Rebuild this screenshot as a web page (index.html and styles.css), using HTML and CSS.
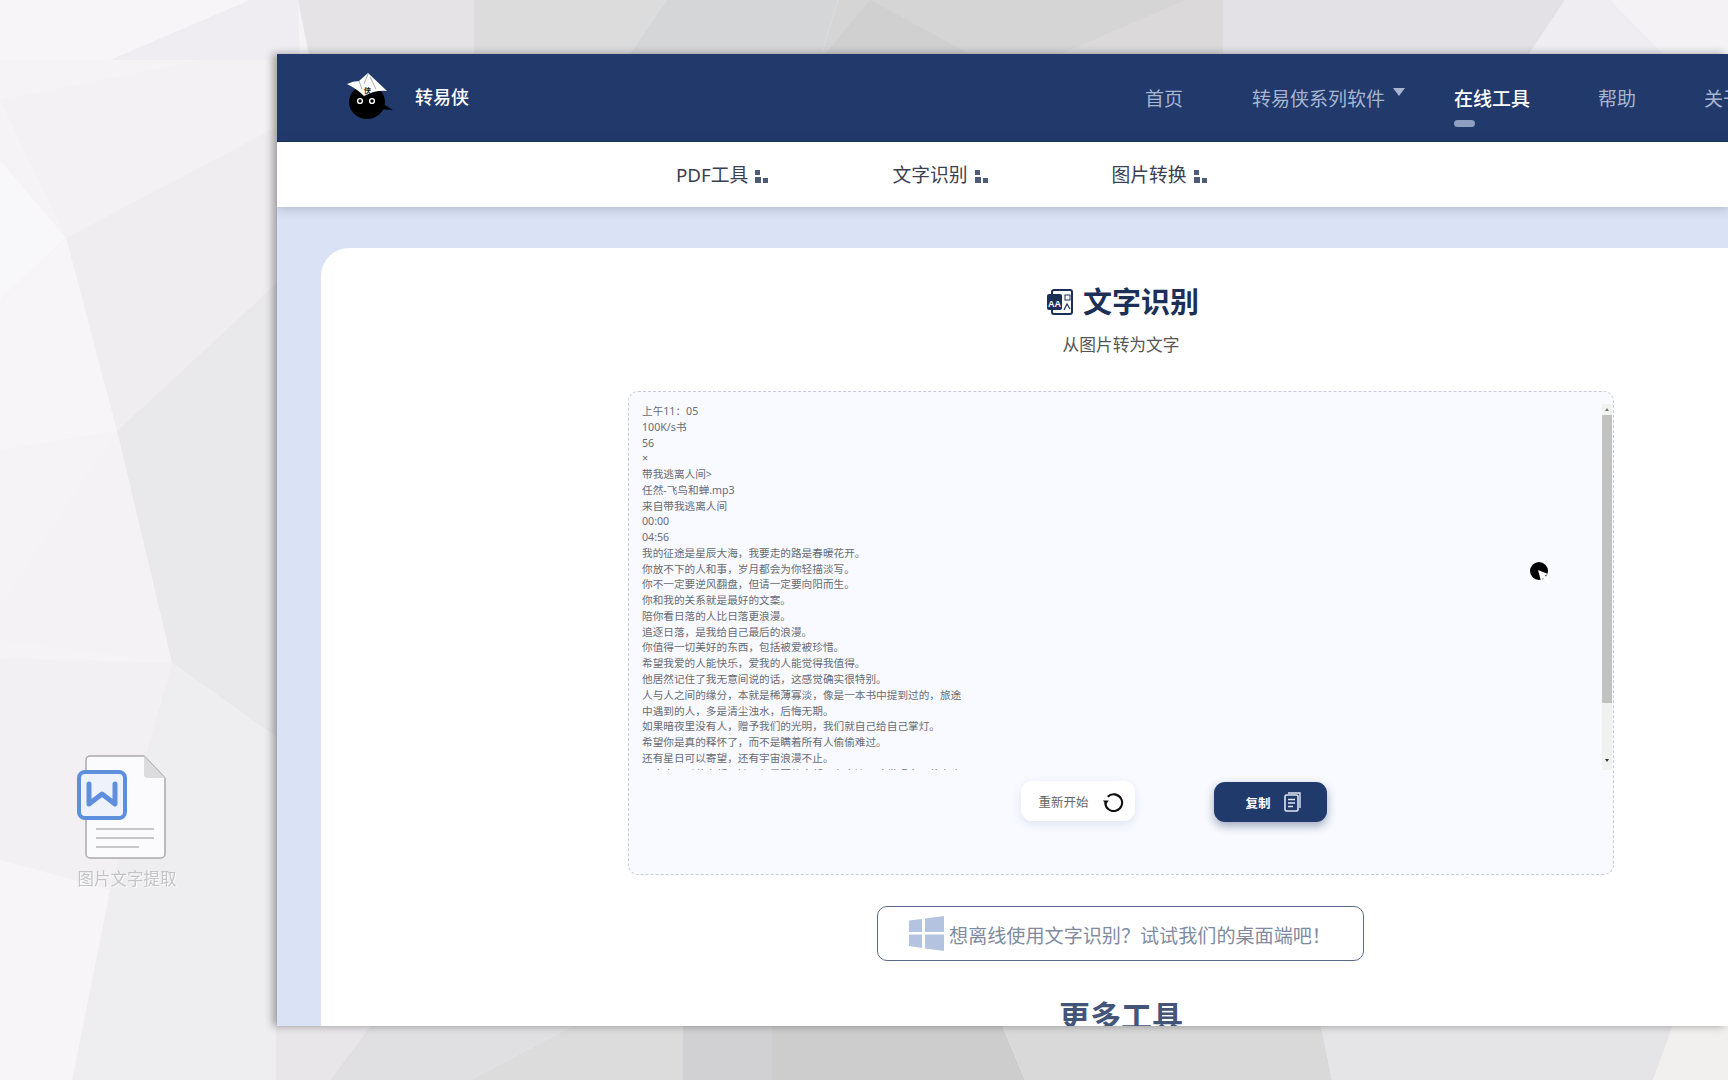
FILE: index.html
```html
<!DOCTYPE html>
<html lang="zh">
<head>
    <meta charset="utf-8">
    <title>转易侠 文字识别</title>
    <link rel="stylesheet" href="styles.css">
</head>
<body>
    <!-- desktop wallpaper, only the strips around the window show -->
    <svg class="wallpaper" viewBox="0 0 1728 1080" width="1728" height="1080">
        <rect width="1728" height="1080" fill="#f5f3f6"/>
        <!-- left side -->
        <polygon points="0,100 300,40 280,125 66,238" fill="#f3f1f4"/>
        <polygon points="66,238 280,125 280,280 117,431" fill="#efedf0"/>
        <polygon points="117,431 280,280 280,740 172,663" fill="#e9e8eb"/>
        <polygon points="172,663 280,740 280,1080 72,1080 110,890 147,750" fill="#eeedef"/>
        <polygon points="0,160 66,238 0,300" fill="#f8f7f9"/>
        <polygon points="0,300 66,238 117,431 0,450" fill="#f7f5f8"/>
        <polygon points="0,607 117,431 172,663 0,640" fill="#f4f2f5"/>
        <polygon points="0,658 172,663 147,750 110,890 0,860" fill="#f2f0f3"/>
        <polygon points="0,860 110,890 72,1080 0,1080" fill="#f7f5f7"/>
        <!-- top strip -->
        <polygon points="0,0 250,0 110,60 0,60" fill="#f7f5f8"/>
        <polygon points="250,0 298,0 300,60 110,60" fill="#efedf1"/>
        <polygon points="298,0 474,0 474,60 310,60" fill="#e5e3e6"/>
        <polygon points="474,0 667,0 625,60 474,60" fill="#dcdcdc"/>
        <polygon points="667,0 838,0 820,60 625,60" fill="#d5d6d7"/>
        <polygon points="838,0 1223,0 1223,60 820,60" fill="#d6d5d6"/>
        <polygon points="870,0 981,60 820,60" fill="#d0d0d0"/>
        <polygon points="1185,0 1223,0 1223,60 1047,60" fill="#dbd9da"/>
        <polygon points="1223,0 1565,0 1525,60 1223,60" fill="#e3e1e5"/>
        <polygon points="1565,0 1728,0 1728,60 1525,60" fill="#efedf1"/>
        <polygon points="1610,0 1728,0 1728,120" fill="#f5f2f6"/>
        <!-- bottom strip -->
        <polygon points="276,1020 375,1020 330,1080 276,1080" fill="#e8e6e8"/>
        <polygon points="375,1020 584,1020 470,1080 330,1080" fill="#e0dfe1"/>
        <polygon points="584,1020 683,1020 683,1080 660,1080 470,1080" fill="#dcdcdc"/>
        <polygon points="683,1020 772,1020 772,1080 683,1080" fill="#d1d0d2"/>
        <polygon points="772,1020 1000,1020 1025,1080 772,1080" fill="#cdcdce"/>
        <polygon points="1000,1020 1320,1020 1332,1080 1025,1080" fill="#dad9da"/>
        <polygon points="1320,1020 1675,1020 1653,1080 1332,1080" fill="#e5e4e7"/>
        <polygon points="1675,1020 1728,1020 1728,1080 1653,1080" fill="#f2f0ef"/>
    </svg>

    <div class="desktop-file">
        <svg class="file-icon" viewBox="0 0 90 106" width="90" height="106">
            <path d="M9 6 a4 4 0 0 1 4 -4 h54 l21 22 v76 a4 4 0 0 1 -4 4 h-71 a4 4 0 0 1 -4 -4z" fill="#fbfbfd" stroke="#a9a9ac" stroke-width="1.5"/>
            <path d="M67 2 l21 22 h-17 a4 4 0 0 1 -4 -4z" fill="#dcdcdf"/>
            <rect x="2" y="18" width="46" height="46" rx="6" fill="#eef3fb" stroke="#5d8fdc" stroke-width="4"/>
            <path d="M12 30 v20 l13 -10 l13 10 v-20" fill="none" stroke="#5d8fdc" stroke-width="5" stroke-linecap="round" stroke-linejoin="round"/>
            <path d="M19 75 h58 M19 84 h58 M19 93 h43" stroke="#c8c8ca" stroke-width="2"/>
        </svg>
        <div class="file-name">图片文字提取</div>
    </div>

    <div class="window">
        <div class="nav">
            <svg class="logo" viewBox="0 0 48 48" width="48" height="48">
                <path d="M35 30 l13 8 l-15 -1z" fill="#000"/>
                <ellipse cx="22" cy="30" rx="18" ry="17" fill="#000"/>
                <path d="M23 1 L42 19 Q30 18 19 24 Q12 17 2 12 Q8 9 14 9z" fill="#fff"/>
                <path d="M23 2 l-4 10 M25 5 l6 12 M14 9 l3 8" stroke="#8a93a5" stroke-width="0.8"/>
                <text x="19" y="21" class="logo-mark">侠</text>
                <circle cx="15" cy="29" r="2.4" fill="none" stroke="#fff" stroke-width="1.4"/>
                <circle cx="27" cy="29" r="2.4" fill="none" stroke="#fff" stroke-width="1.4"/>
            </svg>
            <span class="brand">转易侠</span>
            <div class="menu">
                <a class="menu-item">首页</a>
                <a class="menu-item has-caret">转易侠系列软件<i class="caret"></i></a>
                <a class="menu-item active">在线工具</a>
                <a class="menu-item">帮助</a>
                <a class="menu-item">关于我们</a>
            </div>
        </div>

        <div class="subnav">
            <a class="sub-item">PDF工具
                <svg viewBox="0 0 13 13" width="13" height="13"><path d="M0 0h5v5H0zM0 7h6v6H0zM8 8h5v5H8z" fill="#4d5a78"/></svg>
            </a>
            <a class="sub-item">文字识别
                <svg viewBox="0 0 13 13" width="13" height="13"><path d="M0 0h5v5H0zM0 7h6v6H0zM8 8h5v5H8z" fill="#4d5a78"/></svg>
            </a>
            <a class="sub-item">图片转换
                <svg viewBox="0 0 13 13" width="13" height="13"><path d="M0 0h5v5H0zM0 7h6v6H0zM8 8h5v5H8z" fill="#4d5a78"/></svg>
            </a>
        </div>

        <div class="card">
            <h1 class="title">
                <svg viewBox="0 0 26 26" width="26" height="26">
                    <rect x="5" y="1" width="20" height="24" rx="2" fill="#fff" stroke="#1d2f57" stroke-width="2"/>
                    <rect x="0" y="5" width="15" height="16" rx="2" fill="#1d2f57"/>
                    <text x="1" y="18" class="title-mark">AA</text>
                    <rect x="18" y="6" width="5" height="5" fill="none" stroke="#1d2f57" stroke-width="1"/>
                    <path d="M17 21 l3 -6 l3 5" fill="none" stroke="#1d2f57" stroke-width="1.2"/>
                </svg>
                文字识别
            </h1>
            <p class="subtitle">从图片转为文字</p>

            <div class="result-box">
                <div class="result-row">
                    <div class="result-text">上午11：05
100K/s书
56
×
带我逃离人间&gt;
任然-飞鸟和蝉.mp3
来自带我逃离人间
00:00
04:56
我的征途是星辰大海，我要走的路是春暖花开。
你放不下的人和事，岁月都会为你轻描淡写。
你不一定要逆风翻盘，但请一定要向阳而生。
你和我的关系就是最好的文案。
陪你看日落的人比日落更浪漫。
追逐日落，是我给自己最后的浪漫。
你值得一切美好的东西，包括被爱被珍惜。
希望我爱的人能快乐，爱我的人能觉得我值得。
他居然记住了我无意间说的话，这感觉确实很特别。
人与人之间的缘分，本就是稀薄寡淡，像是一本书中提到过的，旅途
中遇到的人，多是清尘浊水，后悔无期。
如果暗夜里没有人，赠予我们的光明，我们就自己给自己掌灯。
希望你是真的释怀了，而不是瞒着所有人偷偷难过。
还有星日可以寄望，还有宇宙浪漫不止。
一个人可以什么都不缺，但需要的人却不在身边，才发现自己什么也</div>
                    <div class="scrollbar">
                        <i class="arrow-up"></i>
                        <div class="thumb"></div>
                        <i class="arrow-down"></i>
                    </div>
                </div>
                <div class="actions">
                    <button class="btn btn-restart">重新开始
                        <svg viewBox="0 0 20 20" width="21" height="21">
                            <path d="M4.500 5.500 A8 8 0 1 1 2.200 11" fill="none" stroke="#111" stroke-width="2"/>
                            <path d="M0 9 h5.500 l-2.700 4.200z" fill="#111"/>
                        </svg>
                    </button>
                    <button class="btn btn-copy">复制
                        <svg viewBox="0 0 17 20" width="17" height="20">
                            <path d="M4 1 h12 v15" fill="none" stroke="#dfe6f6" stroke-width="1.4"/>
                            <rect x="1" y="3" width="13" height="16" rx="1.500" fill="none" stroke="#dfe6f6" stroke-width="1.600"/>
                            <path d="M4 7.500 h7 M4 11 h7 M4 14.500 h5" stroke="#dfe6f6" stroke-width="1.400"/>
                        </svg>
                    </button>
                </div>
            </div>

            <a class="desktop-link">
                <svg viewBox="0 0 35 35" width="35" height="35">
                    <path d="M0 4.500 L13 3 V16 H0z M16 2.500 L35 0 V16 H16z M0 18.500 H13 V32 L0 30z M16 18.500 H35 V35 L16 32.500z" fill="#b4c4e0"/>
                </svg>
                想离线使用文字识别？试试我们的桌面端吧！
            </a>

            <h2 class="more-title">更多工具</h2>
        </div>
    </div>

    <!-- recording cursor -->
    <svg class="cursor" viewBox="0 0 26 26" width="26" height="26">
        <circle cx="10" cy="10" r="9" fill="#000"/>
        <path d="M9 9 l10 4 l-3 1.500 l6 7 l-2 2 l-6 -6.500 l-2 3z" fill="#fff"/>
    </svg>
</body>
</html>
```

FILE: styles.css
```css
* { box-sizing: border-box; }
html, body { margin: 0; height: 100%; }
body { font-family: "Noto Sans", "Noto Sans CJK SC", sans-serif; background: #eee; overflow: hidden; position: relative; }

.wallpaper { position: absolute; left: 0; top: 0; }

.desktop-file { position: absolute; left: 72px; top: 754px; width: 110px; text-align: center; }
.file-icon { display: block; margin-left: 5px; }
.file-name { margin-top: 9px; font-size: 16.5px; line-height: 20px; color: #c4c4c7; text-shadow: 1px 1px 1px #fff; white-space: nowrap; filter: blur(.4px); }

.window { position: absolute; left: 277px; top: 54px; width: 1451px; height: 972px; background: #dae3f6; overflow: hidden; box-shadow: -4px 0 8px rgba(0,0,0,.35); }

.nav { height: 88px; background: #213a6b; display: flex; align-items: center; padding-left: 68px; border-bottom: 1px solid #1b2f58; }
.logo { flex-shrink: 0; margin-top: -4px; }
.logo-mark { font-size: 7px; fill: #222; font-weight: 700; }
.brand { margin-left: 22px; font-size: 18px; font-weight: 500; color: #fff; white-space: nowrap; margin-top: -3px; }
.menu { margin-left: 642px; display: flex; align-items: stretch; height: 100%; flex-shrink: 0; }
.menu-item { position: relative; display: flex; align-items: center; padding: 0 34px; font-size: 19px; color: #a7b5d0; white-space: nowrap; }
.menu-item.has-caret { padding: 0 15px 0 35px; }
.menu-item.active { color: #fff; font-weight: 500; }
.menu-item.active::after { content: ""; position: absolute; left: 34px; top: 66px; width: 21px; height: 7px; border-radius: 4px; background: #8f9fc2; }
.caret { width: 0; height: 0; margin: -11px 0 0 8px; border-left: 6.5px solid transparent; border-right: 6.5px solid transparent; border-top: 8px solid #a7b5d0; }

.subnav { position: relative; height: 65px; background: #fff; display: flex; align-items: center; padding: 0 0 2px 399px; gap: 124px; box-shadow: 0 2px 10px rgba(40,50,80,.25); }
.sub-item { display: flex; align-items: center; gap: 7px; font-size: 18.800px; color: #3a4052; white-space: nowrap; }
.sub-item svg { margin-top: 6px; }

.card { width: 1600px; height: 900px; margin: 41px 0 0 44px; background: #fff; border-radius: 28px 0 0 0; padding-top: 34px; display: flex; flex-direction: column; align-items: center; }
.title { margin: 0; padding-left: 4px; display: flex; align-items: center; gap: 10px; font-size: 29px; line-height: 40px; font-weight: 700; color: #1d2f57; }
.title-mark { font-size: 9px; fill: #fff; font-family: "Liberation Sans", sans-serif; }
.subtitle { margin: 11px 0 0; font-size: 16.700px; line-height: 24px; color: #555; }

.result-box { width: 986px; height: 484px; margin-top: 34px; padding: 12px 1px 0 13px; background: #f8faff; border: 1px dashed #c9ccd3; border-radius: 10px; flex-shrink: 0; }
.result-row { display: flex; justify-content: space-between; height: 366px; }
.result-text { font-size: 10.650px; line-height: 15.770px; color: #686c74; white-space: pre-line; overflow: hidden; }
.scrollbar { width: 10px; background: #f1f1f1; display: flex; flex-direction: column; align-items: center; }
.thumb { width: 100%; height: 288px; background: #c1c1c1; }
.arrow-up, .arrow-down { width: 0; height: 0; border-left: 2.500px solid transparent; border-right: 2.500px solid transparent; }
.arrow-up { margin: 4px 0 4px; border-bottom: 3px solid #777; }
.arrow-down { margin-top: 56px; border-top: 3px solid #333; }

.actions { display: flex; gap: 79px; margin: 12px 0 0 379px; align-items: flex-start; }
.btn { display: flex; align-items: center; justify-content: center; height: 40px; border: none; border-radius: 11px; font-family: inherit; font-size: 12.500px; }
.btn-restart { width: 114px; gap: 14px; padding-left: 12px; margin-top: -1px; background: #fff; color: #666; box-shadow: 0 3px 10px rgba(90,110,160,.15); }
.btn-copy { width: 113px; gap: 13px; padding-left: 11px; background: #203a6b; color: #fff; font-weight: 700; box-shadow: 0 4px 10px rgba(30,45,90,.4); }

.desktop-link { display: flex; align-items: center; justify-content: center; gap: 5px; width: 487px; height: 55px; margin: 31px 2px 0 0; padding-top: 2px; border: 1px solid #5a6b8c; border-radius: 10px; font-size: 19.100px; color: #7f8ba0; white-space: nowrap; flex-shrink: 0; }
.desktop-link svg { margin-top: -2px; }

.more-title { margin: 35px 0 0; font-size: 31px; line-height: 40px; font-weight: 700; color: #44557a; }

.cursor { position: absolute; left: 1529px; top: 561px; }
```
